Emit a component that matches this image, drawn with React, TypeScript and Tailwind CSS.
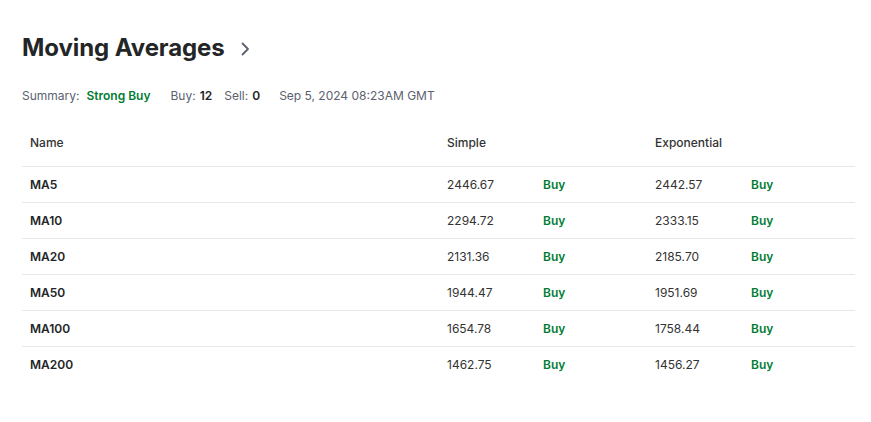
import React from 'react';

const rows = [
  { name: 'MA5', simple: '2446.67', exp: '2442.57' },
  { name: 'MA10', simple: '2294.72', exp: '2333.15' },
  { name: 'MA20', simple: '2131.36', exp: '2185.70' },
  { name: 'MA50', simple: '1944.47', exp: '1951.69' },
  { name: 'MA100', simple: '1654.78', exp: '1758.44' },
  { name: 'MA200', simple: '1462.75', exp: '1456.27' },
];

const cols = 'grid grid-cols-[417px_96px_112px_96px_112px]';

export default function App() {
  return (
    <div className="w-[871px] h-[422px] bg-white px-[22px] pt-[33px] font-['Inter',sans-serif] text-[#232526]">
      <div className="flex items-center gap-[12px]">
        <h2 className="text-[24px] leading-[30px] font-bold tracking-[-0.1px]">Moving Averages</h2>
        <svg width="16" height="16" viewBox="0 0 16 16" fill="none" className="mt-[1px]">
          <path d="M5.5 2.5L11 8l-5.5 5.5" stroke="#5b616e" strokeWidth="1.8" strokeLinecap="round" strokeLinejoin="round" />
        </svg>
      </div>

      <div className="flex items-center mt-[24px] text-[12px] leading-[18px]">
        <span className="text-[#5b616e]">Summary:</span>
        <span className="ml-[7px] font-semibold text-[#007c32]">Strong Buy</span>
        <span className="ml-[20px] text-[#5b616e]">Buy:</span>
        <span className="ml-[4px] font-semibold">12</span>
        <span className="ml-[12px] text-[#5b616e]">Sell:</span>
        <span className="ml-[4px] font-semibold">0</span>
        <span className="ml-[19px] text-[#5b616e]">Sep 5, 2024 08:23AM GMT</span>
      </div>

      <div className="mt-[14px] w-[833px] text-[12px] leading-[18px]">
        <div className={`${cols} h-[48px] items-center border-b border-[#e6e9eb] font-medium text-[#333]`}>
          <div className="px-[8px]">Name</div>
          <div className="col-span-2 px-[8px]">Simple</div>
          <div className="col-span-2 px-[8px]">Exponential</div>
        </div>
        {rows.map((r, i) => (
          <div
            key={r.name}
            className={`${cols} h-[36px] items-center ${i < rows.length - 1 ? 'border-b border-[#e6e9eb]' : ''}`}
          >
            <div className="px-[8px] font-semibold text-[#232526]">{r.name}</div>
            <div className="px-[8px] text-[#333]">{r.simple}</div>
            <div className="px-[8px] font-semibold text-[#007c32]">Buy</div>
            <div className="px-[8px] text-[#333]">{r.exp}</div>
            <div className="px-[8px] font-semibold text-[#007c32]">Buy</div>
          </div>
        ))}
      </div>
    </div>
  );
}
